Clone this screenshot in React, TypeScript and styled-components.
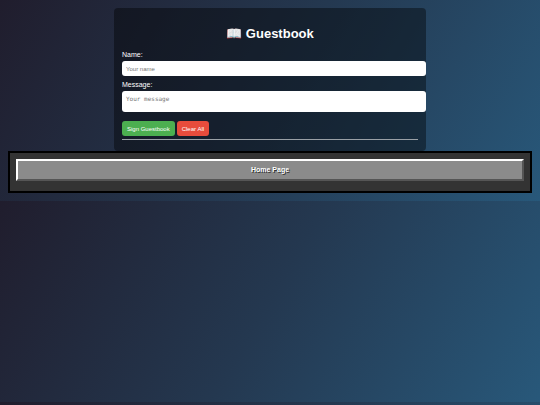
import React, { useState } from "react";
import styled, { createGlobalStyle } from "styled-components";

const GlobalStyle = createGlobalStyle`
  body {
    margin: 0;
    padding: 8px;
    font-family: "Liberation Sans", Arial, sans-serif;
    font-size: 7px;
    line-height: 8px;
    color: #fff;
    background: linear-gradient(120deg, #201d2d, #243850, #28587a);
  }
`;

const Card = styled.main`
  box-sizing: border-box;
  width: 60%;
  max-width: 312px;
  margin: 0 auto;
  padding: 18px 8px 11px;
  border-radius: 4px;
  background: rgba(0, 0, 0, 0.4);
`;

const Title = styled.h1`
  margin: 0 0 9px;
  font-size: 13px;
  line-height: 16px;
  text-align: center;
`;

const Field = styled.div`
  display: flex;
  flex-direction: column;
  gap: 2px;
  margin: 0 -8px 5px 0;
`;

const Label = styled.label`
  display: block;
`;

const TextInput = styled.input`
  box-sizing: border-box;
  width: 100%;
  height: 15px;
  padding: 4px;
  border: 0;
  border-radius: 3px;
  font-family: "Liberation Sans", Arial, sans-serif;
  font-size: 6px;
`;

const MessageInput = styled.textarea`
  box-sizing: border-box;
  width: 100%;
  height: 21px;
  padding: 4px;
  border: 0;
  border-radius: 3px;
  font-family: "DejaVu Sans Mono", monospace;
  font-size: 6px;
  resize: none;
`;

const Actions = styled.div`
  display: flex;
  gap: 2px;
  margin-top: 9px;
`;

const Button = styled.button<{ $color: string }>`
  height: 15px;
  padding: 0 5px;
  border: 0;
  border-radius: 3px;
  font-family: "Liberation Sans", Arial, sans-serif;
  font-size: 6px;
  color: #fff;
  background: ${(p) => p.$color};
  cursor: pointer;
`;

const Divider = styled.hr`
  margin: 3px 0 0;
  border: 0;
  border-top: 1px solid #9aa0a6;
`;

const NavFrame = styled.nav`
  padding: 6px 6px 10px;
  border: 2px solid #000;
  background: #333;
`;

const NavLink = styled.a`
  display: block;
  padding: 5px;
  border: 2px solid;
  border-color: #fff #555 #555 #fff;
  background: #8b8b8b;
  color: #fff;
  font-weight: bold;
  text-align: center;
  text-decoration: none;
  text-shadow: 1px 1px 0 #333;
`;

export default function App() {
  const [name, setName] = useState("");
  const [message, setMessage] = useState("");

  const clearAll = () => {
    setName("");
    setMessage("");
  };

  return (
    <>
      <GlobalStyle />
      <Card>
        <Title>📖 Guestbook</Title>
        <form onSubmit={(e) => e.preventDefault()}>
          <Field>
            <Label htmlFor="name">Name:</Label>
            <TextInput
              id="name"
              type="text"
              placeholder="Your name"
              value={name}
              onChange={(e) => setName(e.target.value)}
            />
          </Field>
          <Field>
            <Label htmlFor="message">Message:</Label>
            <MessageInput
              id="message"
              placeholder="Your message"
              value={message}
              onChange={(e) => setMessage(e.target.value)}
            />
          </Field>
          <Actions>
            <Button type="submit" $color="#4caf50">Sign Guestbook</Button>
            <Button type="button" $color="#e74c3c" onClick={clearAll}>Clear All</Button>
          </Actions>
        </form>
        <Divider />
      </Card>
      <NavFrame>
        <NavLink href="#home">Home Page</NavLink>
      </NavFrame>
    </>
  );
}
